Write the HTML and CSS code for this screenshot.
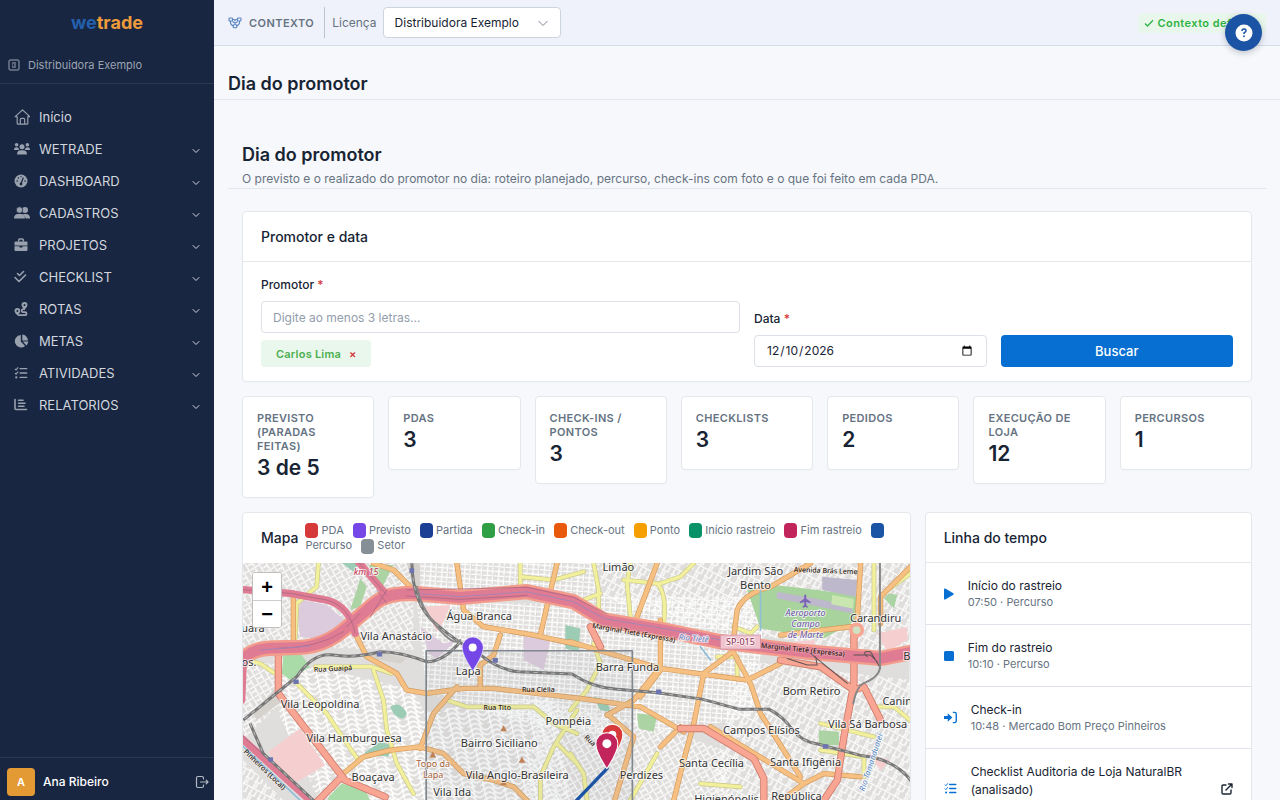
FILE: index.html
```html
<!DOCTYPE html>
<html lang="pt-BR">
<head>
<meta charset="utf-8">
<meta name="viewport" content="width=device-width, initial-scale=1">
<title>Dia do promotor</title>
<link rel="stylesheet" href="styles.css">
</head>
<body>
<svg class="defs" width="0" height="0" aria-hidden="true">
  <symbol id="chev" viewBox="0 0 8 8"><path d="M1 2.5 4 5.5 7 2.5" fill="none" stroke="currentColor" stroke-width="1" stroke-linecap="round" stroke-linejoin="round"/></symbol>
  <symbol id="tasks" viewBox="0 0 16 16"><path d="M1 3.2 2.3 4.5 4.8 1.6M1 8 2.3 9.3 4.8 6.4" fill="none" stroke="currentColor" stroke-width="1.2"/><circle cx="2.6" cy="13" r="1.3" fill="currentColor"/><path d="M7 3h7.500M7 8h7.500M7 13h7.500" stroke="currentColor" stroke-width="1.7" stroke-linecap="round"/></symbol>
</svg>
<div class="app">
  <aside class="sidebar">
    <a class="logo" href="#"><span class="logo-we">we</span>trade</a>
    <div class="tenant">
      <svg class="i12" viewBox="0 0 12 12" fill="none" stroke="currentColor"><rect x="1" y="1" width="10" height="10" rx="1"/><path d="M4 4h4M4 6h1M6 6h2M4 8h4"/></svg>
      Distribuidora Exemplo
    </div>
    <nav class="menu">
      <a href="#"><svg viewBox="0 0 16 16" fill="none" stroke="currentColor" stroke-width="1.2" stroke-linejoin="round"><path d="M3.2 7.6H1.2L8.5.9l7.3 6.7h-2M3.2 7.4v6.8q0 1 1 1h8.6q1 0 1-1V7.4M6.3 15V10.5q0-1.2 1.2-1.2h2q1.2 0 1.2 1.2V15"/></svg><span>Início</span></a>
      <a href="#"><svg viewBox="0 0 16 16" fill="currentColor"><circle cx="2.6" cy="3.8" r="1.8"/><circle cx="13.4" cy="3.8" r="1.8"/><circle cx="8" cy="5.8" r="2.5"/><path d="M0 9q0-2.8 2.4-2.8Q4 6.200 4.700 7.200 4.600 8.300 5.300 9ZM16 9q0-2.800-2.400-2.800Q12 6.200 11.300 7.200 11.400 8.300 10.700 9ZM3 13.500Q3 9.200 7 9.200h2q4 0 4 4.300Z"/></svg><span>WETRADE</span><svg class="chev"><use href="#chev"/></svg></a>
      <a href="#"><svg viewBox="0 0 16 16"><circle cx="7" cy="8" r="6.500" fill="currentColor"/><path d="M7 11 9.300 4.500" stroke="#182641" stroke-width="1.200"/><circle cx="7" cy="11" r="1.400" fill="#182641"/><circle cx="3.200" cy="8" r=".8" fill="#182641"/><circle cx="4.400" cy="5" r=".8" fill="#182641"/><circle cx="7" cy="3.600" r=".7" fill="#182641"/><circle cx="11" cy="8" r=".8" fill="#182641"/></svg><span>DASHBOARD</span><svg class="chev"><use href="#chev"/></svg></a>
      <a href="#"><svg viewBox="0 0 16 16" fill="currentColor"><circle cx="11" cy="5" r="3"/><path d="M9 9h3q4 0 4 4.500h-4Z"/><circle cx="5.500" cy="5" r="3.200" stroke="#182641" stroke-width=".7"/><path d="M0 13.500Q0 9 4 9h3q4 0 4 4.500Z"/></svg><span>CADASTROS</span><svg class="chev"><use href="#chev"/></svg></a>
      <a href="#"><svg viewBox="0 0 16 16"><path d="M4.700 4.500V3q0-1 1-1h2.600q1 0 1 1v1.500" fill="none" stroke="currentColor" stroke-width="1.500"/><path d="M1.500 4.500h11q1 0 1 1v3h-13v-3q0-1 1-1ZM.5 9.300h5v1.200h3V9.300h5V13q0 1-1 1h-11q-1 0-1-1Z" fill="currentColor"/></svg><span>PROJETOS</span><svg class="chev"><use href="#chev"/></svg></a>
      <a href="#"><svg viewBox="0 0 16 16" fill="none" stroke="currentColor" stroke-width="1.600" stroke-linecap="round" stroke-linejoin="round"><path d="m3.500 4.500 2 2L9.500 2.500M1 8.500l4 4 6.500-6.500"/></svg><span>CHECKLIST</span><svg class="chev"><use href="#chev"/></svg></a>
      <a href="#"><svg viewBox="0 0 16 16"><path d="M11 8.200H9.200a1.500 1.500 0 0 0 0 3H11a1.500 1.500 0 0 1 0 3H4" fill="none" stroke="currentColor" stroke-width="1.800"/><path fill="currentColor" fill-rule="evenodd" d="M10.500 8.800Q7.500 5.800 7.500 4a3 3 0 0 1 6 0q0 1.800-3 4.800ZM10.500 3a1 1 0 1 0 0 2 1 1 0 0 0 0-2ZM3.400 14.500Q.5 11.800.5 10a2.900 2.900 0 0 1 5.800 0q0 1.800-2.900 4.500ZM3.400 9a1 1 0 1 0 0 2 1 1 0 0 0 0-2Z"/></svg><span>ROTAS</span><svg class="chev"><use href="#chev"/></svg></a>
      <a href="#"><svg viewBox="0 0 16 16" fill="currentColor"><path d="M6.800 2v6.500l4.300 4.400A6.200 6.200 0 1 1 6.800 2ZM8.300 1.500a6.200 6.200 0 0 1 5.700 6H8.300ZM8.800 8.600h5.500q-.3 2.400-1.900 3.900Z"/></svg><span>METAS</span><svg class="chev"><use href="#chev"/></svg></a>
      <a href="#"><svg class="tasks"><use href="#tasks"/></svg><span>ATIVIDADES</span><svg class="chev"><use href="#chev"/></svg></a>
      <a href="#"><svg viewBox="0 0 16 16" fill="none" stroke="currentColor" stroke-width="1.600" stroke-linecap="round"><path d="M1 2.500v9q0 1 1 1h10.500M4.500 3.200H9M4.500 6.200h6.500M4.500 9.300h5.500"/></svg><span>RELATORIOS</span><svg class="chev"><use href="#chev"/></svg></a>
    </nav>
    <div class="user">
      <span class="avatar">A</span>
      <span class="user-name">Ana Ribeiro</span>
      <button class="logout" type="button" aria-label="Sair"><svg viewBox="0 0 14 14" fill="none" stroke="currentColor" stroke-width="1.200" stroke-linecap="round" stroke-linejoin="round"><path d="M8.500 4V3q0-1.500-1.500-1.500H3Q1.500 1.500 1.500 3v8q0 1.500 1.500 1.500h4Q8.500 12.500 8.500 11v-1M5.500 7h7.500M11.200 5.200 13 7l-1.800 1.800"/></svg></button>
    </div>
  </aside>

  <main class="main">
    <header class="context">
      <svg class="ctx-icon" viewBox="0 0 14 14" fill="none" stroke="currentColor" stroke-width="1.100" stroke-linejoin="round"><rect x="1" y="2" width="3.500" height="3" rx=".8"/><rect x="9.500" y="2" width="3.500" height="3" rx=".8"/><rect x="5.200" y="8.800" width="3.600" height="3" rx=".8"/><path d="M4.500 3.500h1.300q1.200 0 1.200 1.200.0-1.200 1.200-1.200h1.300M2.500 5v1.500q0 2.300 2.700 3.300M11.500 5v1.500q0 2.300-2.700 3.300M4.500 5.500l2.500 1.700 2.500-1.700"/></svg>
      <span class="ctx-title">Contexto</span>
      <span class="ctx-rule"></span>
      <label for="licenca">Licença</label>
      <div class="select"><select id="licenca"><option>Distribuidora Exemplo</option></select><svg viewBox="0 0 10 10" fill="none" stroke="currentColor"><path d="M.5 3 5 7.500 9.500 3"/></svg></div>
      <span class="ctx-ok"><svg viewBox="0 0 10 10" fill="none" stroke="currentColor" stroke-width="1.300"><path d="M1 5.500 3.500 8 9 2.300"/></svg>Contexto definido</span>
      <button class="help" type="button" aria-label="Ajuda"><svg viewBox="0 0 18 18"><circle cx="9" cy="9" r="8.500" fill="#fff"/><path d="M7 7q0-2 2-2t2 1.700Q11 7.800 9 9v.9" fill="none" stroke="#1b54a4" stroke-width="1.500"/><circle cx="9" cy="12.300" r=".95" fill="#1b54a4"/></svg></button>
    </header>
    <div class="topline"><h1>Dia do promotor</h1></div>
    <div class="page-head">
      <h2>Dia do promotor</h2>
      <p>O previsto e o realizado do promotor no dia: roteiro planejado, percurso, check-ins com foto e o que foi feito em cada PDA.</p>
    </div>

    <div class="content">
      <section class="card">
        <h3 class="card-head">Promotor e data</h3>
        <form class="filters">
          <div class="f-promotor">
            <label for="promotor">Promotor <span class="req">*</span></label>
            <input id="promotor" class="field" type="text" placeholder="Digite ao menos 3 letras...">
            <span class="chip">Carlos Lima <button type="button" aria-label="Remover">×</button></span>
          </div>
          <div class="f-data">
            <label for="data">Data <span class="req">*</span></label>
            <input id="data" class="field" type="date" value="2026-12-10">
          </div>
          <button class="btn" type="button">Buscar</button>
        </form>
      </section>

      <section class="stats">
        <div class="card stat"><span>Previsto (paradas feitas)</span><strong>3 de 5</strong></div>
        <div class="card stat"><span>PDAs</span><strong>3</strong></div>
        <div class="card stat"><span>Check-ins / pontos</span><strong>3</strong></div>
        <div class="card stat"><span>Checklists</span><strong>3</strong></div>
        <div class="card stat"><span>Pedidos</span><strong>2</strong></div>
        <div class="card stat"><span>Execução de loja</span><strong>12</strong></div>
        <div class="card stat"><span>Percursos</span><strong>1</strong></div>
      </section>

      <div class="columns">
        <section class="card map-card">
          <div class="card-head map-head">
            <h3>Mapa</h3>
            <p class="legend"><i class="sw red"></i> <span>PDA</span> <i class="sw violet"></i> <span>Previsto</span> <i class="sw navy"></i> <span>Partida</span> <i class="sw green"></i> <span>Check-in</span> <i class="sw orange"></i> <span>Check-out</span> <i class="sw amber"></i> <span>Ponto</span> <i class="sw teal"></i> <span class="nw">Início rastreio</span> <i class="sw pink"></i> <span class="nw">Fim rastreio</span> <i class="sw blue"></i> <span>Percurso</span> <i class="sw gray"></i> <span>Setor</span></p>
          </div>
          <div class="map">
            <svg class="map-svg" viewBox="0 0 666 300" preserveAspectRatio="xMidYMin slice">
              <defs>
                <pattern id="sa" width="30" height="42" patternUnits="userSpaceOnUse" patternTransform="rotate(28)"><path d="M0 4h30M5 0v42M0 25h18M20 4v21M12 25v17" stroke="#fff" stroke-width="4" fill="none"/><path d="M0 7h30M0 28h18" stroke="#cfcdcb" stroke-width="1"/></pattern>
                <pattern id="sb" width="36" height="28" patternUnits="userSpaceOnUse" patternTransform="rotate(-30)"><path d="M0 4h36M5 0v28M24 4v24M5 17h19" stroke="#fff" stroke-width="4" fill="none"/><path d="M0 7h36M8 0v28" stroke="#cfcdcb" stroke-width="1"/></pattern>
                <pattern id="sc" width="34" height="28" patternUnits="userSpaceOnUse" patternTransform="rotate(4)"><path d="M0 4h34M5 0v28M21 4v24M0 18h34" stroke="#fff" stroke-width="4" fill="none"/><path d="M0 7h34M24 0v28" stroke="#cfcdcb" stroke-width="1"/></pattern>
                <pattern id="sd" width="60" height="60" patternUnits="userSpaceOnUse" patternTransform="rotate(-12)"><path d="M-5 20Q15-5 30 20T65 20M-5 35Q15 10 30 35T65 35M-5 50Q15 25 30 50T65 50M-5 65Q15 40 30 65T65 65M-5 5Q15-20 30 5T65 5M30 0v60M2 0v60" stroke="#fff" stroke-width="4.500" fill="none"/></pattern>
              </defs>
              <rect width="666" height="300" fill="#e0dedc"/>
              <g transform="translate(-3 -53) scale(.33333)" fill="none" stroke-linejoin="round" stroke-linecap="round">
                <path fill="url(#sb)" d="M0 150h520v270L100 410 0 450Z"/>
                <path fill="url(#sc)" d="M520 150h560l-20 110-540-15ZM990 260h600l-60 360-260 50-290-90ZM530 280h510l120 410-340-60-260-80Z"/>
                <path fill="url(#sa)" d="M1080 150h950v300l-700-110-250-80ZM1490 450l350 40 180 20v560h-500l-100-260Z"/>
                <path fill="url(#sd)" d="M100 440l420 100 40 80 20 450H330L120 620ZM560 600l380-40 50 300-430 250Z"/>
                <path fill="url(#sb)" d="M900 570l330 70 220 80 50 350H820ZM0 460h110l10 120L0 700Z"/>
                <path fill="url(#sa)" d="M0 740l330 330H0Z"/>
                <g stroke="none">
                  <path fill="#dccbdc" d="M190 270l70 15 65 55-70 50-75-10-10-80ZM540 350l70 50 40-10-60 55-25-15ZM850 380l80 10-20 90-60-30Z"/>
                  <path fill="#f5cfcf" d="M550 290l80-5-20 50-20 30ZM85 725l95-70 75 110-110 65ZM1600 400l120-10 10 25-80 10ZM1910 370l90-20v40l-60 35ZM1880 730l70 20-30 30Z"/>
                  <path fill="#a9dba9" d="M130 435h55l25 35-60 40-25-20ZM265 860l40-40 70 20 30 60H260Z"/>
                  <path fill="#abd3a3" d="M350 240l10-35 20 25-20 60-30 10ZM385 165h75l-35 70ZM1190 610l60 5-10 50-45-10ZM1945 250l25 5-10 40-30-30ZM1735 660l60 5v40h-60Z"/>
                  <path fill="#9dccb4" d="M370 730l50-35 35 10-10 35ZM450 590q30-20 50 20-10 30-40 0ZM300 155h60l-20 30ZM975 345l45 10-5 70-40-10ZM1060 560l40 10 10 35-30-5Z"/>
                  <path fill="#a8d39c" d="M1520 240l80-15 50 5 200 25-10 80-90 50-190-30Z"/>
                  <path fill="#bdb8cb" d="M1610 245l220 40 8 25-230-45ZM1745 200l105 10-5 50-100-20Z"/>
                  <path fill="#c9e6b0" d="M1775 255l65 12-3 28-65-12Z"/>
                  <path fill="#d5d1cc" d="M500 160h40v80l-25-20ZM360 440l60-15 80 20-20 15ZM40 610l60-70 30 30-80 60Z"/>
                </g>
                <path stroke="#c9c98a" stroke-width="14" d="M235 160l-5 70-60 50-5 110M170 520l90 90 60 90 35 50M10 450l50 10 60 40M225 470h170l60 20M400 480l30 90 10 90 30 100 50 90M620 570l60 20h200l60 50 70 30M1010 600l-70 110-40 90v80M840 160v80M840 200l100 10 90-25M1060 160l15 80v80M1170 160l-10 60 10 100M1150 210l100 10q30 30 20 120M1480 350l50 20 20-20M1060 400l20 60-40 80-50 60M1030 270l50-20M1260 220l60-20 40-40M1900 160v200M2010 190l-70 50M1900 590h60l60 50M1740 640l160 40M1740 720l130 20v60M1500 830l-120-10M1250 730l-80 140M990 730l40 60 10 80M1430 440h60v60M950 700l60 60"/>
                <path stroke="#f2f09c" stroke-width="10" d="M235 160l-5 70-60 50-5 110M170 520l90 90 60 90 35 50M10 450l50 10 60 40M225 470h170l60 20M400 480l30 90 10 90 30 100 50 90M620 570l60 20h200l60 50 70 30M1010 600l-70 110-40 90v80M840 160v80M840 200l100 10 90-25M1060 160l15 80v80M1170 160l-10 60 10 100M1150 210l100 10q30 30 20 120M1480 350l50 20 20-20M1060 400l20 60-40 80-50 60M1030 270l50-20M1260 220l60-20 40-40M1900 160v200M2010 190l-70 50M1900 590h60l60 50M1740 640l160 40M1740 720l130 20v60M1500 830l-120-10M1250 730l-80 140M990 730l40 60 10 80M1430 440h60v60M950 700l60 60"/>
                <!-- avenues -->
                <path stroke="#d39a5c" stroke-width="16" d="M160 255v140M650 160l20 140 60 50 150 25 140 30M950 160l-50 215M400 160l60 20 50 50M345 370l35 70 90 50 30 50 60 10 110-15h90l260 30 180 25 130 75M780 375l-20 60-40 30v60M650 530l-70 80-40 105M310 790l60-50 80-20 90-10 70 20 60 60 90 20 60 20 90 90M990 395l100 30 170 50 260 35 100-50M1260 330v140l-80 100-80 45M1260 480l-60 80M1470 430l-80 60-30 150-30 110-30 120M1470 410l60 110 30 90 120 190M1480 380l10-80q20-50 100-70l120-70M1860 160l-10 170M1620 375l210-25M2020 160l-100 100v80M1250 160l-60 160M1320 650l-60 60M1110 620l70 60-30 100-30 100M1410 650l280 170 60-30 110 10M1690 820l-80 60"/>
                <path stroke="#f7c083" stroke-width="12" d="M160 255v140M650 160l20 140 60 50 150 25 140 30M950 160l-50 215M400 160l60 20 50 50M345 370l35 70 90 50 30 50 60 10 110-15h90l260 30 180 25 130 75M780 375l-20 60-40 30v60M650 530l-70 80-40 105M310 790l60-50 80-20 90-10 70 20 60 60 90 20 60 20 90 90M990 395l100 30 170 50 260 35 100-50M1260 330v140l-80 100-80 45M1260 480l-60 80M1470 430l-80 60-30 150-30 110-30 120M1470 410l60 110 30 90 120 190M1480 380l10-80q20-50 100-70l120-70M1860 160l-10 170M1620 375l210-25M2020 160l-100 100v80M1250 160l-60 160M1320 650l-60 60M1110 620l70 60-30 100-30 100M1410 650l280 170 60-30 110 10M1690 820l-80 60"/>
                <!-- primary roads -->
                <path stroke="#cf7b6c" stroke-width="22" d="M115 430v120l85 110 115 150 120 50M305 800l-80 80M1840 360v160l-30 160-20 130-60 90M1620 450l120 20 100 70 30-10 50 100M1320 655h70l150 90 30 60v90M1050 350l30 60"/>
                <path stroke="#f8a593" stroke-width="17" d="M115 430v120l85 110 115 150 120 50M305 800l-80 80M1840 360v160l-30 160-20 130-60 90M1620 450l120 20 100 70 30-10 50 100M1320 655h70l150 90 30 60v90M1050 350l30 60"/>
                <circle cx="1848" cy="360" r="17" stroke="#f8a593" stroke-width="11" fill="#cfe3c4"/>
                <!-- expressway -->
                <path stroke="#f39c8c" stroke-width="46" d="M0 460C40 395 120 420 200 410C290 395 330 340 380 300C420 260 450 250 520 250L660 262L860 245L1000 275L1090 330L1270 360L1440 395L1690 425L1920 445L2020 425"/>
                <path stroke="#df7c93" stroke-width="32" d="M0 460C40 395 120 420 200 410C290 395 330 340 380 300C420 260 450 250 520 250L660 262L860 245L1000 275L1090 330L1270 360L1440 395L1690 425L1920 445L2020 425"/>
                <path stroke="#df7c93" stroke-width="22" d="M0 238l150 12 110 20q70 20 85 100M350 150l90 105M10 450l-5 120M0 680l220 200"/>
                <path stroke="#a0607f" stroke-width="2" d="M0 238l150 12 110 20q70 20 85 100M350 150l90 105M390 320l50-80M320 350l40-40M410 240l30 40M500 240l360-8 140 30 100 50M110 415q120 0 200-50M0 670l220 200M500 258l160 10 200-12"/>
                <path stroke="#a884b4" stroke-width="3" d="M60 420q120-10 150-12M520 250l140 10 200-15 140 30 90 50 180 30 170 35"/>
                <path stroke="#8fbfd9" stroke-width="5" d="M0 700l180 170M1380 410l30 40M1560 240v120M1920 670l-40 130"/>
                <path stroke="#5d5253" stroke-width="3" d="M1640 445l60 20h30l-5-25M1710 430l110 90M1840 435h50l20 20M1880 440q-20-20 10-15l30 50"/>
                <!-- railways -->
                <path stroke="#777" stroke-width="9" stroke-linecap="butt" d="M515 150q0 130 70 190t130 90q60 50 120 55l160 7q60 40 130 45l120 10 140 20 110 30h90q40 20 70 60t80 45l130 35q100 10 150 80M660 395q-50 60-100 60-80-30-140-30-80 20-140 10-60-10-110 65L10 630M30 640l40 90 160 150"/>
                <path stroke="#bbb" stroke-width="3" stroke-dasharray="13 13" stroke-linecap="butt" d="M515 150q0 130 70 190t130 90q60 50 120 55l160 7q60 40 130 45l120 10 140 20 110 30h90q40 20 70 60t80 45l130 35q100 10 150 80M660 395q-50 60-100 60-80-30-140-30-80 20-140 10-60-10-110 65L10 630M30 640l40 90 160 150"/>
                <path stroke="#888" stroke-width="6" d="M1918 150v320q0 30-50 50-20 10-30 60M530 230q10 60 60 120t70 40"/>
                <path stroke="none" fill="#6c75b0" d="M508 175h14v14h-14zM410 425h16v14h-16zM160 508h16v14h-16zM85 741h14v14h-14zM757 444h16v14h-16zM1247 538h16v14h-16zM1747 702h16v14h-16z"/>
                <path stroke="none" fill="#c78154" d="M790 645l10 18h-20zM845 740l10 18h-20zM578 724l10 18h-20zM790 807l10 18h-20z"/>
                <path fill="#787e86" fill-opacity=".08" stroke="#7f868d" stroke-width="5" d="M558 422h618v700H558Z"/>
                <path stroke="none" fill="#7b63b5" d="M1691 256q3-5 6 0v10l13 9v5l-13-4v9l5 5v3l-8-2-8 2v-3l5-5v-9l-13 4v-5l13-9Z"/>
                <rect x="1440" y="375" width="120" height="42" fill="#efc4cf" stroke="#c9889c" stroke-width="2"/>
                <path stroke="#1b54a4" stroke-width="10" d="M1100 775 990 890"/>
              </g>
              <g class="place">
                <text x="375" y="8">Limão</text><text x="512" y="12">Jardim São</text><text x="512" y="26">Bento</text><text x="236" y="57">Água Branca</text><text x="153" y="77">Vila Anastácio</text><text x="225" y="112">Lapa</text><text x="384" y="108">Barra Funda</text><text x="325" y="162">Pompéia</text><text x="77" y="145">Vila Leopoldina</text><text x="111" y="179">Vila Hamburguesa</text><text x="256" y="184">Bairro Siciliano</text><text x="130" y="218">Boaçava</text><text x="274" y="216">Vila Anglo-Brasileira</text><text x="209" y="233">Vila Ida</text><text x="468" y="204">Santa Cecília</text><text x="562" y="203">Santa Ifigênia</text><text x="398" y="216">Perdizes</text><text x="518" y="171">Campos Elísios</text><text x="568" y="132">Bom Retiro</text><text x="624" y="165">Vila Sá Barbosa</text><text x="660" y="142">Canindé</text><text x="632" y="59">Carandiru</text><text x="671" y="97">Brás</text><text x="483" y="240">Higienópolis</text><text x="553" y="237">República</text><text x="10" y="69">uara</text><text x="6" y="103">os.</text>
              </g>
              <g class="street">
                <text x="90" y="108" transform="rotate(-3 90 108)">Rua Guaipá</text><text x="295" y="129">Rua Clélia</text><text x="254" y="147">Rua Tito</text><text x="582" y="10" transform="rotate(2 582 10)">Avenida Brás Leme</text><text x="390" y="72" transform="rotate(10 390 72)">Marginal Tietê (Expressa)</text><text x="559" y="89" transform="rotate(6 559 89)">Marginal Tietê (Expressa)</text><text x="20" y="208" transform="rotate(44 20 208)">Pinheiros (Local)</text><text x="345" y="179" transform="rotate(45 345 179)">Rua</text>
              </g>
              <g class="water"><text x="450" y="78" transform="rotate(5 450 78)">Rio Tietê</text><text x="630" y="200" transform="rotate(-72 630 200)">Rio Tamanduateí</text></g>
              <g class="air"><text x="562" y="53">Aeroporto</text><text x="562" y="64">Campo</text><text x="562" y="75">de Marte</text></g>
              <g class="peak"><text x="190" y="204">Topo da</text><text x="190" y="215">Lapa</text></g>
              <g class="road-ref"><text x="497" y="82">SP-015</text><text class="km" x="123" y="12">km 15</text></g>
              <path d="M229.500 108Q219 92 219 84.500a10.500 10.500 0 0 1 21 0q0 7.500-10.500 23.500Z" fill="#7447e6" stroke="#fff" stroke-opacity=".5"/><circle cx="229.500" cy="84.500" r="4" fill="#fff"/>
              <path d="M369 195q-10.500-16-10.500-23.500a10.500 10.500 0 0 1 21 0q0 7.500-10.500 23.500Z" fill="#d63939" stroke="#fff"/><circle cx="369" cy="171.500" r="4" fill="#fff"/>
              <path d="M363.500 205.500q-11-17-11-25a11 11 0 0 1 22 0q0 8-11 25Z" fill="#c2255c" stroke="#fff"/><circle cx="363.500" cy="180.500" r="4.500" fill="#fff"/>
            </svg>
            <div class="zoom"><button type="button" aria-label="Aproximar">+</button><button type="button" aria-label="Afastar">−</button></div>
          </div>
        </section>

        <section class="card">
          <h3 class="card-head">Linha do tempo</h3>
          <ul class="timeline">
            <li><svg class="narrow" viewBox="0 0 10 12"><path d="M0 1.500Q0 0 1.300.5l8 4.700q.9.800 0 1.600l-8 4.700Q0 12 0 10.500Z" fill="currentColor"/></svg><div><b>Início do rastreio</b><small>07:50 · Percurso</small></div></li>
            <li><svg class="narrow" viewBox="0 0 10 12"><rect y="1" width="10" height="10" rx="1.500" fill="currentColor"/></svg><div><b>Fim do rastreio</b><small>10:10 · Percurso</small></div></li>
            <li><svg viewBox="0 0 14 14"><path d="M0 5.500h4V2.300L9 7 4 11.700V8.500H0Z" fill="currentColor"/><path d="M9.500 1.500h2q1.700 0 1.700 1.700v7.600q0 1.700-1.700 1.700h-2" fill="none" stroke="currentColor" stroke-width="1.500"/></svg><div><b>Check-in</b><small>10:48 · Mercado Bom Preço Pinheiros</small></div></li>
            <li><svg><use href="#tasks"/></svg><div><b>Checklist Auditoria de Loja NaturalBR (analisado)</b><small>10:52 · Mercado Bom Preço Pinheiros</small></div><a class="open" href="#" aria-label="Abrir"><svg viewBox="0 0 12 12" fill="none" stroke="currentColor" stroke-width="1.400" stroke-linecap="round" stroke-linejoin="round"><path d="M5 2H2.200Q1 2 1 3.200v6.600Q1 11 2.200 11h6.600q1.200 0 1.200-1.200V7M7.500 1H11v3.500M11 1 5 7"/></svg></a></li>
          </ul>
        </section>
      </div>
    </div>
  </main>
</div>
</body>
</html>
```
FILE: styles.css
```css
* { box-sizing: border-box; }
body { margin: 0; font: 400 12px/18px Inter, sans-serif; color: #182433; background: #f6f8fb; }
h1, h2, h3, p, ul { margin: 0; padding: 0; font-weight: inherit; }
button, input, select { font: inherit; color: inherit; }
button { cursor: pointer; }
a { color: inherit; text-decoration: none; }
.defs { position: absolute; }

.app { display: grid; grid-template-columns: 214px minmax(0, 1fr); height: 100vh; }

.sidebar { display: flex; flex-direction: column; background: #182641; color: #d3d7de; }
.logo { padding: 10px 0; text-align: center; font-size: 18px; line-height: 26px; font-weight: 700; color: #ee9b3b; }
.logo-we { color: #2560ad; }
.tenant { display: flex; align-items: center; gap: 8px; padding: 9px 8px 8px; border-bottom: 1px solid #2a3850; font-size: 11px; line-height: 20px; color: #9ba3b1; }
.i12 { width: 12px; height: 12px; stroke-width: 1; }
.menu { flex: 1; padding-top: 17px; }
.menu a { display: flex; align-items: center; height: 32px; padding: 0 14px; font-size: 13px; }
.menu svg { width: 16px; height: 16px; margin-right: 9px; color: #99a1ae; }
.menu .tasks { width: 14px; height: 14px; margin-right: 11px; }
.menu .chev { width: 8px; height: 8px; margin: 3px 0 0 auto; color: #d3d7de; }
.user { display: flex; align-items: center; gap: 8px; padding: 10px 5px 4px 7px; border-top: 1px solid #2a3850; }
.avatar { width: 28px; height: 28px; border-radius: 4px; background: #e39a35; color: #fff; font-weight: 600; font-size: 11px; line-height: 28px; text-align: center; }
.user-name { flex: 1; color: #fff; font-weight: 500; }
.logout { padding: 0; border: 0; background: none; color: #b4bac5; height: 14px; }
.logout svg { width: 14px; height: 14px; display: block; }

.main { min-width: 0; overflow-y: auto; scrollbar-width: none; }
.context { position: relative; display: flex; align-items: center; height: 46px; padding: 0 14px; background: #eff2fa; border-bottom: 1px solid #d3deec; color: #667382; }
.ctx-icon { width: 14px; height: 14px; margin-right: 7px; color: #5583c0; }
.ctx-title { font-size: 11px; font-weight: 600; letter-spacing: .04em; text-transform: uppercase; }
.ctx-rule { width: 1px; height: 31px; margin: 0 7px 0 10px; background: #bcc4d0; }
.select { position: relative; margin-left: 6px; }
.select select { appearance: none; width: 178px; height: 31px; padding: 0 30px 0 11px; border: 1px solid #ccd4df; border-radius: 4px; background: #fff; color: #182433; }
.select svg { position: absolute; right: 13px; top: 11px; width: 10px; height: 10px; color: #7c8796; pointer-events: none; }
.ctx-ok { display: flex; align-items: center; gap: 4px; margin-left: auto; padding: 1px 6px; border-radius: 4px; background: #e9f6ec; color: #2fb344; font-size: 11px; font-weight: 600; letter-spacing: .04em; }
.ctx-ok svg { width: 10px; height: 10px; }
.help { position: absolute; right: 18px; top: 14px; width: 37px; height: 37px; padding: 0; border: 0; border-radius: 50%; background: #1b54a4; box-shadow: 0 2px 6px rgba(24, 36, 51, .25); display: grid; place-items: center; }
.help svg { width: 18px; height: 18px; }

.topline { padding: 26px 14px 3px; border-bottom: 1px solid #e2e6ec; }
h1, h2 { font-size: 18px; line-height: 24px; font-weight: 600; }
.page-head { margin: 42px 14px 0; padding: 0 14px; border-bottom: 1px solid #e2e6ec; }
.page-head h2 { padding-top: 1px; }
.page-head p { padding-top: 3px; line-height: 18px; color: #667382; }

.content { display: grid; gap: 14px; padding: 22px 28px; }
.card { min-width: 0; background: #fff; border: 1px solid #e4e7ec; border-radius: 4px; box-shadow: 0 1px 2px rgba(24, 36, 51, .02); }
.card-head { display: flex; align-items: center; height: 50px; padding: 0 18px; border-bottom: 1px solid #e4e7ec; font-size: 14px; line-height: 20px; font-weight: 500; }
.filters { display: grid; grid-template-columns: repeat(12, minmax(0, 1fr)); gap: 14px; align-items: end; padding: 14px 18px; }
.f-promotor { grid-column: span 6; }
.f-data, .btn { grid-column: span 3; }
.filters label { display: block; margin-bottom: 7px; font-weight: 500; }
.req { color: #d63939; }
.field { display: block; width: 100%; height: 32px; padding: 0 11px; border: 1px solid #dce1e8; border-radius: 4px; background: #fff; outline: 0; }
.field::placeholder { color: #929dab; opacity: 1; }
.chip { display: inline-flex; align-items: center; gap: 8px; height: 27px; margin-top: 7px; padding: 0 14px 0 15px; border-radius: 4px; background: #eaf7ec; color: #4caf50; font-size: 11px; font-weight: 600; letter-spacing: .02em; vertical-align: top; }
.chip button { padding: 0; border: 0; background: none; color: #d63939; }
.btn { height: 32px; border: 0; border-radius: 4px; background: #066fd1; color: #fff; font-size: 13px; font-weight: 500; }

.stats { display: grid; grid-template-columns: repeat(7, minmax(0, 1fr)); gap: 14px; align-items: start; }
.stat { padding: 14px 14px 15px; }
.stat span { display: block; font-size: 11px; line-height: 14px; font-weight: 600; letter-spacing: .03em; text-transform: uppercase; color: #667382; }
.stat strong { display: block; margin-top: 1px; font-size: 21px; line-height: 28px; font-weight: 600; }

.columns { display: grid; grid-template-columns: minmax(0, 668fr) minmax(0, 327fr); gap: 14px; align-items: start; }
.map-head { gap: 7px; border-bottom: 0; }
.map-head h3 { font-size: 14px; }
.legend { font-size: 11px; line-height: 15px; font-weight: 400; color: #667382; }
.legend span { margin-right: 6px; }
.nw { white-space: nowrap; }
.sw { display: inline-block; width: 13px; height: 15px; border-radius: 4px; vertical-align: middle; }
.red { background: #d63939; }
.violet { background: #7447e6; }
.navy { background: #1b3f94; }
.green { background: #2f9e44; }
.orange { background: #e8590c; }
.amber { background: #f59f00; }
.teal { background: #099268; }
.pink { background: #c2255c; }
.blue { background: #1b54a4; }
.gray { background: #868e96; }

.map { position: relative; height: 300px; overflow: hidden; }
.map-svg { display: block; width: 100%; height: 100%; }
.map-svg text { font-family: "Noto Sans", sans-serif; text-anchor: middle; stroke: #fff; stroke-opacity: .7; stroke-width: 2px; paint-order: stroke; }
.place { font-size: 11px; fill: #333; }
.street { font-size: 7px; font-weight: 500; fill: #2c1a12; }
.map-svg .street text { stroke-opacity: .2; }
.water { font-size: 8px; font-style: italic; fill: #5a86c4; }
.air { font-size: 9px; font-style: italic; fill: #6c53a8; }
.peak { font-size: 9px; fill: #a8643c; }
.road-ref { font-size: 9px; fill: #8a2a48; }
.road-ref .km { font-style: italic; fill: #c0304c; }
.zoom { position: absolute; left: 9px; top: 9px; border: 1px solid #c0bfbd; border-radius: 3px; background: #fff; overflow: hidden; }
.zoom button { display: block; width: 28px; height: 27px; padding: 0; border: 0; background: #fff; color: #000; font: 700 20px/26px "Liberation Sans", sans-serif; }
.zoom button + button { border-top: 1px solid #ccc; }

.timeline { list-style: none; }
.timeline li { display: flex; align-items: center; gap: 14px; padding: 14px 18px; min-height: 62px; border-bottom: 1px solid #dfe3e9; }
.timeline li > svg { flex: none; width: 13px; height: 13px; color: #066fd1; }
.timeline li > .narrow { width: 10px; height: 12px; }
.timeline div { flex: 1; }
.timeline b, .timeline small { display: block; font-weight: 400; }
.timeline b { font-size: 12px; line-height: 18px; }
.timeline small { font-size: 11px; line-height: 15px; color: #667382; }
.open svg { display: block; width: 12px; height: 12px; }
```
